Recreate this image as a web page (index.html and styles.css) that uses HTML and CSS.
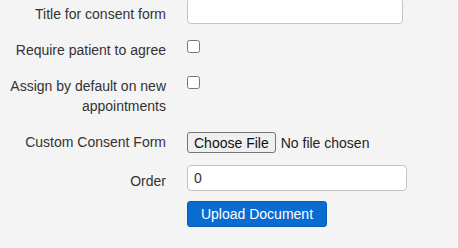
FILE: index.html
```html
<!DOCTYPE html>
<html>
<head>
<meta charset="utf-8">
<link rel="stylesheet" href="styles.css">
</head>
<body>
<form class="form">
  <div class="row">
    <label class="label" for="title">Title for consent form</label>
    <div class="control"><input id="title" class="text-input text-input--title" type="text"></div>
  </div>
  <div class="row">
    <label class="label" for="agree">Require patient to agree</label>
    <div class="control control--check"><input id="agree" class="check" type="checkbox"></div>
  </div>
  <div class="row">
    <label class="label" for="default">Assign by default on new appointments</label>
    <div class="control control--check"><input id="default" class="check" type="checkbox"></div>
  </div>
  <div class="row row--file">
    <label class="label" for="file">Custom Consent Form</label>
    <div class="control control--file"><input id="file" class="file" type="file"></div>
  </div>
  <div class="row">
    <label class="label" for="order">Order</label>
    <div class="control"><input id="order" class="text-input text-input--order" type="text" value="0"></div>
  </div>
  <div class="row">
    <div class="label"></div>
    <div class="control"><button type="button" class="btn-primary">Upload Document</button></div>
  </div>
</form>
</body>
</html>
```

FILE: styles.css
```css
html, body {
  margin: 0;
  padding: 0;
  background: #f4f4f4;
}
body {
  font-family: "Liberation Sans", Arial, sans-serif;
  font-size: 14px;
  color: #333;
}
.form {
  display: flex;
  flex-direction: column;
  gap: 10px;
  margin-top: -2px;
}
.row {
  display: grid;
  grid-template-columns: 166px 1fr;
  column-gap: 21px;
  align-items: start;
}
.row--file {
  margin-bottom: 2px;
}
.label {
  text-align: right;
  line-height: 20px;
  padding-top: 6px;
}
.control {
  display: flex;
  align-items: flex-start;
}
.control--check {
  padding-top: 6px;
}
.control--file {
  padding-top: 6px;
}
.text-input {
  box-sizing: border-box;
  height: 26px;
  margin: 0;
  padding: 0 6px;
  border: 1px solid #c4c4c4;
  border-radius: 4px;
  background: #fff;
  font-family: "Liberation Sans", Arial, sans-serif;
  font-size: 14px;
  color: #333;
}
.text-input--title { width: 216px; }
.text-input--order { width: 220px; }
.check {
  width: 13px;
  height: 13px;
  margin: 0;
}
.file {
  font-family: "Liberation Sans", Arial, sans-serif;
  font-size: 14px;
  color: #222;
  margin: 0;
}
.file::file-selector-button {
  font-family: "Liberation Sans", Arial, sans-serif;
  font-size: 14px;
  height: 21px;
  padding: 0 6px;
  margin-right: 5px;
  border: 1px solid #767676;
  border-radius: 3px;
  background: #efefef;
  color: #111;
}
.btn-primary {
  box-sizing: border-box;
  height: 26px;
  width: 140px;
  margin: 0;
  padding: 0;
  white-space: nowrap;
  border: 1px solid #0b5cb5;
  border-radius: 3px;
  background: #0a6bd1;
  color: #fff;
  font-family: "Liberation Sans", Arial, sans-serif;
  font-size: 14px;
}
```
